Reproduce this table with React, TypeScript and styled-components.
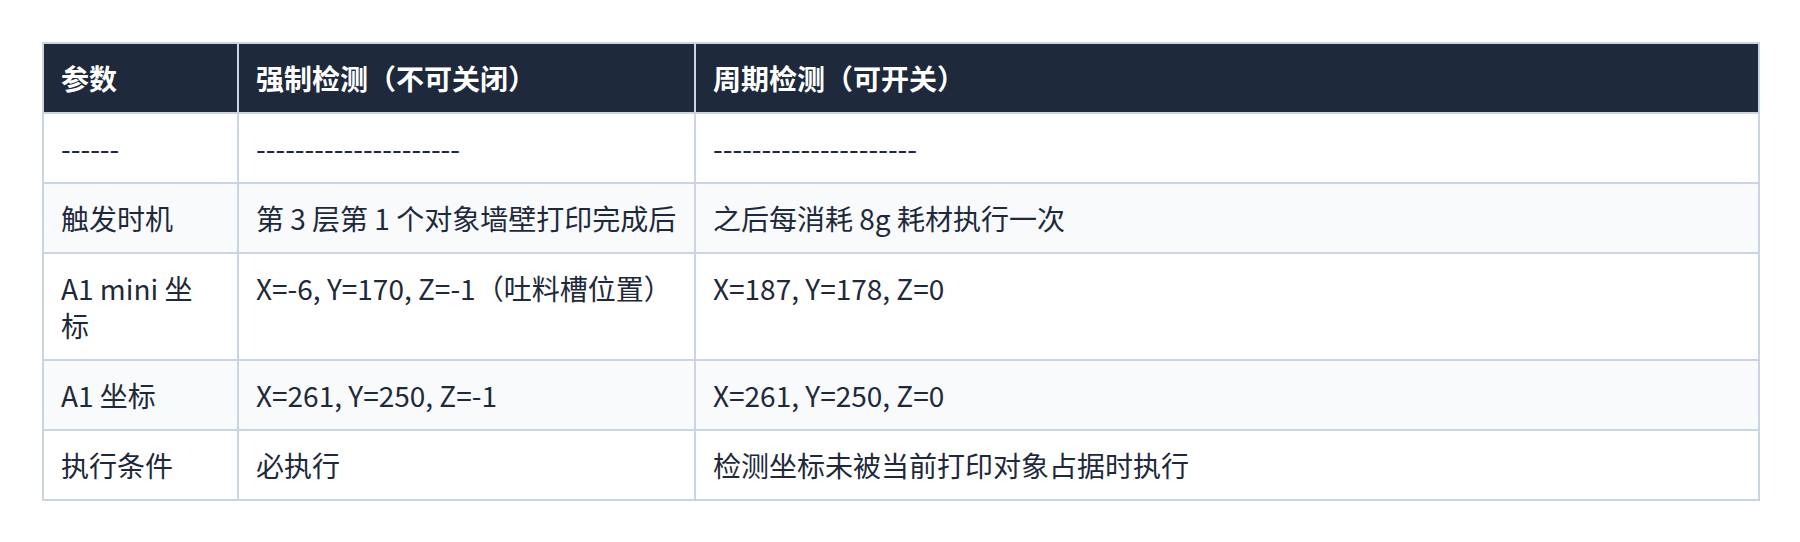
import React from 'react'
import styled, { createGlobalStyle } from 'styled-components'

const GlobalStyle = createGlobalStyle`
  html, body {
    margin: 0;
    padding: 0;
    background: #ffffff;
  }
  body {
    font-family: "Noto Sans CJK SC", "Noto Sans", sans-serif;
    color: #1e293b;
  }
`

const Page = styled.div`
  padding: 42px;
`

const Table = styled.table`
  width: 100%;
  border-collapse: collapse;
  table-layout: fixed;
  border: 2px solid #cbd5e1;
`

const Col = styled.col<{ $w: number }>`
  width: ${p => p.$w}px;
`

const HeadCell = styled.th`
  background: #1e293b;
  color: #ffffff;
  font-weight: 700;
  font-size: 28px;
  line-height: 37px;
  text-align: left;
  padding: 15.5px 17px;
  border: 2px solid #cbd5e1;
`

const Row = styled.tr`
  &:nth-child(even) {
    background: #f8fafc;
  }
`

const Cell = styled.td`
  font-size: 28px;
  line-height: 37px;
  padding: 15.5px 17px;
  border: 2px solid #cbd5e1;
  vertical-align: top;
  color: #1e293b;
`

const rows: string[][] = [
  ['------', '---------------------', '---------------------'],
  ['触发时机', '第 3 层第 1 个对象墙壁打印完成后', '之后每消耗 8g 耗材执行一次'],
  ['A1 mini 坐标', 'X=-6, Y=170, Z=-1（吐料槽位置）', 'X=187, Y=178, Z=0'],
  ['A1 坐标', 'X=261, Y=250, Z=-1', 'X=261, Y=250, Z=0'],
  ['执行条件', '必执行', '检测坐标未被当前打印对象占据时执行'],
]

export default function App() {
  return (
    <>
      <GlobalStyle />
      <Page>
        <Table>
          <colgroup>
            <Col $w={195} />
            <Col $w={457} />
            <Col $w={1064} />
          </colgroup>
          <thead>
            <tr>
              <HeadCell>参数</HeadCell>
              <HeadCell>强制检测（不可关闭）</HeadCell>
              <HeadCell>周期检测（可开关）</HeadCell>
            </tr>
          </thead>
          <tbody>
            {rows.map((r, i) => (
              <Row key={i}>
                {r.map((c, j) => (
                  <Cell key={j}>{c}</Cell>
                ))}
              </Row>
            ))}
          </tbody>
        </Table>
      </Page>
    </>
  )
}
